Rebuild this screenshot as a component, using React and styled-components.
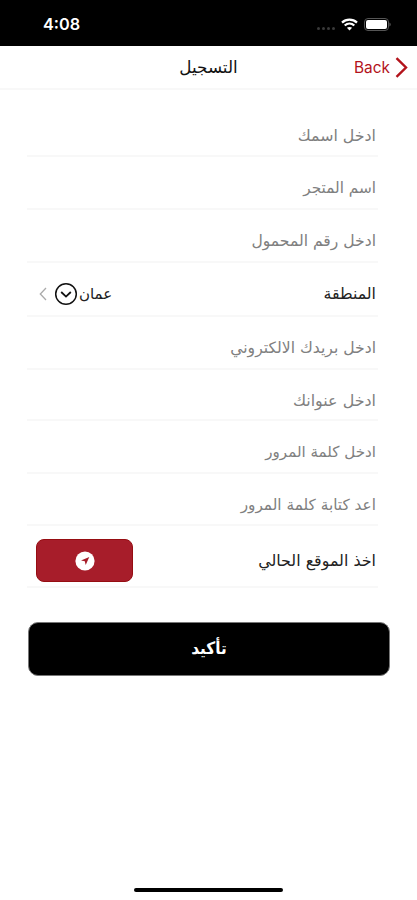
import React from 'react'
import styled, { createGlobalStyle } from 'styled-components'

const fields = [
  { id: 'name', label: 'ادخل اسمك', height: 53, size: 15.8 },
  { id: 'store', label: 'اسم المتجر', height: 53, size: 15.3 },
  { id: 'phone', label: 'ادخل رقم المحمول', height: 53, size: 15.6 },
  { id: 'area', label: 'المنطقة', height: 54, size: 15.8, type: 'select', value: 'عمان' },
  { id: 'email', label: 'ادخل بريدك الالكتروني', height: 53, size: 15.6 },
  { id: 'address', label: 'ادخل عنوانك', height: 51, size: 15.9 },
  { id: 'password', label: 'ادخل كلمة المرور', height: 53, size: 15.1 },
  { id: 'confirm', label: 'اعد كتابة كلمة المرور', height: 52, size: 15.3 },
  { id: 'location', label: 'اخذ الموقع الحالي', height: 62, size: 15.9, type: 'location' },
]

const StatusIcons = () => (
  <StatusRight>
    <Dots>
      <Dot />
      <Dot />
      <Dot />
      <Dot />
    </Dots>
    <svg width="17" height="13" viewBox="0 0 17 13" fill="none" stroke="#fff" strokeWidth="2.3">
      <path d="M1 4.6C5.2 0.7 11.8 0.7 16 4.6" />
      <path d="M3.7 7.5C6.5 5 10.5 5 13.3 7.5" />
      <path d="M8.5 12.6L5.9 9.8C7.3 8.6 9.7 8.6 11.1 9.8Z" fill="#fff" stroke="none" />
    </svg>
    <svg width="27" height="13" viewBox="0 0 27 13">
      <rect x="0.5" y="0.5" width="24" height="12" rx="3.5" fill="none" stroke="#555" />
      <rect x="2" y="2" width="21" height="9" rx="2" fill="#fff" />
      <path d="M25.6 4.5C26.8 5 26.8 8 25.6 8.5Z" fill="#888" />
    </svg>
  </StatusRight>
)

const AreaPicker = ({ value }) => (
  <Picker type="button">
    <PickerValue>{value}</PickerValue>
    <svg width="24" height="24" viewBox="0 0 24 24" fill="none" stroke="#111">
      <circle cx="12" cy="12" r="10.3" strokeWidth="1.5" />
      <path d="M7.2 10L12 14.6L16.8 10" strokeWidth="1.8" />
    </svg>
    <PickerArrow width="8" height="14" viewBox="0 0 8 14" fill="none" stroke="#aaa">
      <path d="M7 1L1.3 7L7 13" strokeWidth="1.3" />
    </PickerArrow>
  </Picker>
)

const LocationIcon = () => (
  <svg width="20" height="20" viewBox="0 0 20 20">
    <circle cx="10" cy="10" r="9.6" fill="#fff" />
    <path d="M14.3 6L10.7 14L9.8 10.3L6 9.4Z" fill="#a71d2a" />
  </svg>
)

const App = () => (
  <>
    <GlobalStyle />
    <Screen>
      <StatusBar>
        <Time>4:08</Time>
        <StatusIcons />
      </StatusBar>
      <Header>
        <Title>التسجيل</Title>
        <Back type="button">
          Back
          <svg width="13" height="21" viewBox="0 0 13 21" fill="none" stroke="#b3131b">
            <path d="M1.5 1.2L11 10.5L1.5 19.8" strokeWidth="2.4" />
          </svg>
        </Back>
      </Header>
      <Form>
        {fields.map(({ id, label, height, size, type, value }) => (
          <Row key={id} $height={height} $raised={Boolean(type)}>
            <Label $dark={Boolean(type)} $size={size}>
              {label}
            </Label>
            {type === 'select' && <AreaPicker value={value} />}
            {type === 'location' && (
              <LocationButton type="button">
                <LocationIcon />
              </LocationButton>
            )}
          </Row>
        ))}
      </Form>
      <Submit type="button">تأكيد</Submit>
      <HomeIndicator />
    </Screen>
  </>
)

const GlobalStyle = createGlobalStyle`
  body {
    margin: 0;
    background: #fff;
  }
  * {
    box-sizing: border-box;
  }
  button {
    border: 0;
    padding: 0;
    background: none;
    font-family: inherit;
    cursor: pointer;
  }
  svg {
    display: block;
    flex-shrink: 0;
  }
`
const Screen = styled.div`
  display: flex;
  flex-direction: column;
  width: 417px;
  height: 900px;
  overflow: hidden;
  background: #fff;
  font-family: 'DejaVu Sans', sans-serif;
`
const StatusBar = styled.div`
  display: flex;
  flex-shrink: 0;
  align-items: center;
  justify-content: space-between;
  height: 46px;
  padding: 2px 26px 0 43px;
  background: #000;
`
const Time = styled.div`
  color: #fff;
  font-family: Inter, sans-serif;
  font-size: 16.3px;
  font-weight: 600;
`
const StatusRight = styled.div`
  display: flex;
  align-items: center;
  gap: 6px;
`
const Dots = styled.div`
  display: flex;
  gap: 2px;
  padding-top: 8px;
`
const Dot = styled.span`
  width: 3px;
  height: 3px;
  border-radius: 50%;
  background: #3a3a3a;
`
const Header = styled.div`
  display: grid;
  flex-shrink: 0;
  grid-template-columns: 1fr auto 1fr;
  align-items: center;
  height: 44px;
  padding: 0 9px;
  border-bottom: 2px solid #f8f8f8;
`
const Title = styled.div`
  grid-column: 2;
  color: #111;
  font-size: 16.8px;
`
const Back = styled.button`
  display: flex;
  align-items: center;
  justify-self: end;
  gap: 5px;
  color: #b3131b;
  && {
    font-family: Inter, sans-serif;
  }
  font-size: 15.4px;
`
const Form = styled.div`
  margin: 14px 39px 0 27px;
`
const Row = styled.div`
  display: flex;
  direction: rtl;
  align-items: center;
  justify-content: space-between;
  height: ${({ $height }) => $height}px;
  padding: ${({ $raised }) => ($raised ? 9 : 11)}px 2px 0 9px;
  border-bottom: 2px solid #f8f8f8;
`
const Label = styled.div`
  color: ${({ $dark }) => ($dark ? '#222' : '#808080')};
  font-size: ${({ $size }) => $size}px;
  white-space: nowrap;
`
const Picker = styled.button`
  display: flex;
  align-items: center;
  padding-left: 3px;
`
const PickerValue = styled.span`
  margin-left: 1px;
  color: #222;
  font-size: 15px;
`
const PickerArrow = styled.svg`
  margin-right: 7px;
`
const LocationButton = styled.button`
  display: flex;
  align-items: center;
  justify-content: center;
  width: 97px;
  height: 43px;
  border: 1px solid #960d12;
  border-radius: 8px;
  background: #a71d2a;
`
const Submit = styled.button`
  flex-shrink: 0;
  height: 54px;
  margin: 34px 27px 0 28px;
  padding-bottom: 2px;
  border: 1px solid #777;
  border-radius: 10px;
  background: #000;
  color: #fff;
  font-size: 17px;
  font-weight: bold;
  font-stretch: condensed;
`
const HomeIndicator = styled.div`
  align-self: center;
  width: 149px;
  height: 4px;
  margin: auto 0 8px;
  border-radius: 2px;
  background: #000;
`

export default App
